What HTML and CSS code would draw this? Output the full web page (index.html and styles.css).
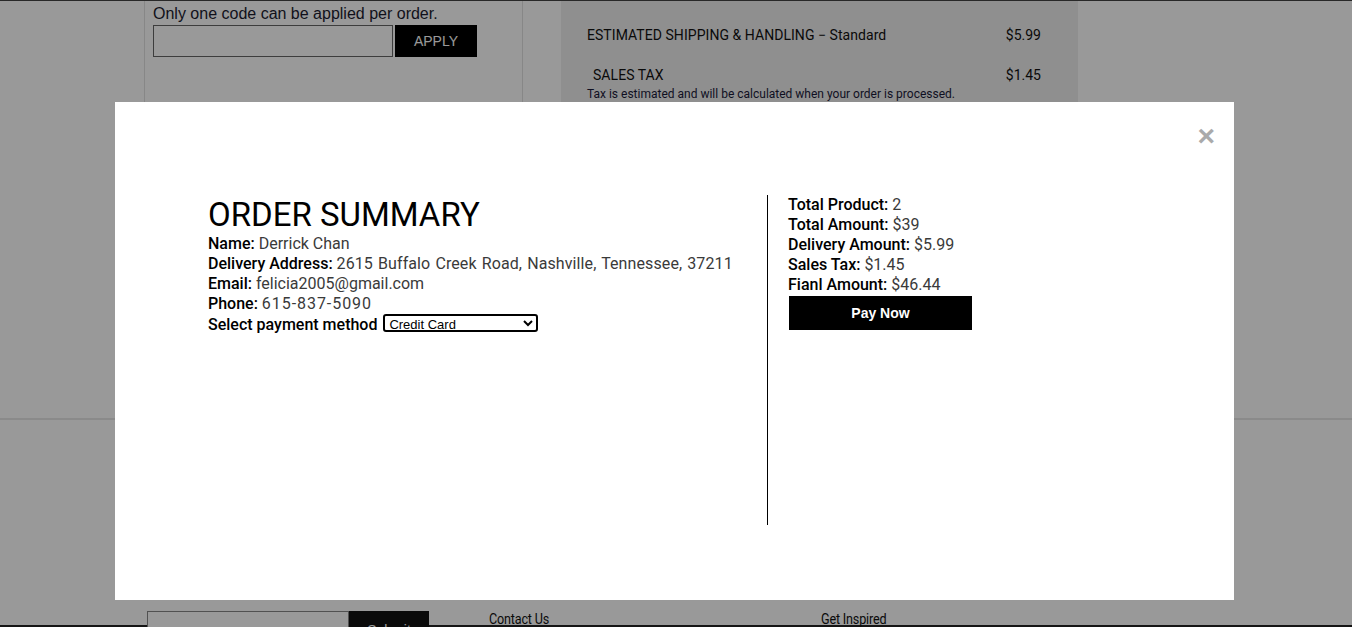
FILE: index.html
```html
<!DOCTYPE html>
<html lang="en">
<head>
<meta charset="utf-8">
<title>Order Summary</title>
<link rel="stylesheet" href="styles.css">
</head>
<body>
<div class="page">
  <div class="topbar"></div>
  <section class="cart">
    <div class="promo">
      <p class="promo-note">Only one code can be applied per order.</p>
      <div class="promo-form">
        <input class="promo-input" type="text" aria-label="Promo code">
        <button class="promo-btn">APPLY</button>
      </div>
    </div>
    <div class="summary">
      <div class="sum-row"><span>ESTIMATED SHIPPING &amp; HANDLING − Standard</span><span>$5.99</span></div>
      <div class="sum-row tax"><span>SALES TAX</span><span>$1.45</span></div>
      <p class="sum-note">Tax is estimated and will be calculated when your order is processed.</p>
    </div>
  </section>
  <div class="divider"></div>
  <footer class="footer">
    <div class="news">
      <input class="news-input" type="text" aria-label="Email">
      <button class="news-btn">Submit</button>
    </div>
    <div class="foot-col first">Contact Us</div>
    <div class="foot-col second">Get Inspired</div>
  </footer>
  <div class="footbar"></div>
</div>

<div class="overlay">
  <div class="modal">
    <div class="modal-top"><span class="close">×</span></div>
    <div class="modal-body">
      <div class="info">
        <h1 class="title">ORDER SUMMARY</h1>
        <p class="line"><b>Name:</b> <span>Derrick Chan</span></p>
        <p class="line"><b>Delivery Address:</b> <span class="addr">2615 Buffalo Creek Road, Nashville, Tennessee, 37211</span></p>
        <p class="line"><b>Email:</b> <span>felicia2005@gmail.com</span></p>
        <p class="line"><b>Phone:</b> <span class="phone">615-837-5090</span></p>
        <p class="line"><b>Select payment method</b> <select class="pay-select"><option>Credit Card</option></select></p>
      </div>
      <div class="totals">
        <p class="line"><b>Total Product:</b> <span>2</span></p>
        <p class="line"><b>Total Amount:</b> <span>$39</span></p>
        <p class="line"><b>Delivery Amount:</b> <span>$5.99</span></p>
        <p class="line"><b>Sales Tax:</b> <span>$1.45</span></p>
        <p class="line"><b>Fianl Amount:</b> <span>$46.44</span></p>
        <button class="pay-btn">Pay Now</button>
      </div>
    </div>
  </div>
</div>
</body>
</html>
```

FILE: styles.css
```css
* { box-sizing: border-box; }
html, body { margin: 0; padding: 0; height: 100%; overflow: hidden; }
body { background: #fff; font-family: Roboto, "Liberation Sans", sans-serif; color: #000; }

.page { width: 1352px; }
.topbar { height: 1px; background: #444; }

.cart { display: flex; height: 417px; }
.promo {
  margin-left: 144px;
  width: 379px;
  border-left: 1px solid #e2e2e2;
  border-right: 1px solid #e2e2e2;
  padding: 3px 0 0 8px;
}
.promo-note { margin: 0; font-family: "Liberation Sans", Arial, sans-serif; font-size: 16px; line-height: 20px; color: #1c1c30; }
.promo-form { display: flex; gap: 2px; margin-top: 1px; }
.promo-input { width: 240px; height: 32px; border: 1px solid #666; margin: 0; background: #fff; }
.promo-btn {
  width: 82px; height: 32px; background: #000; color: #fff; border: 0; margin: 0; padding-bottom: 2px;
  font-family: "Liberation Sans", Arial, sans-serif; font-size: 14px;
}
.summary {
  margin-left: 38px;
  width: 517px;
  background: #eee;
  padding: 24px 37px 0 26px;
  font-size: 14px;
  color: #111;
}
.sum-row { display: flex; justify-content: space-between; line-height: 20px; }
.sum-row span:first-child { letter-spacing: 0.05px; }
.sum-row.tax { margin-top: 20px; padding-left: 6px; }
.sum-note { margin: 2px 0 0; font-size: 12px; line-height: 14px; color: #1a1a3a; }

.divider { height: 2px; background: #e6e6e6; }

.footer { display: flex; align-items: flex-start; height: 205px; padding-top: 191px; }
.news { display: flex; margin-left: 147px; }
.news-input { width: 202px; height: 30px; border: 1px solid #888; margin: 0; }
.news-btn { width: 80px; height: 30px; background: #111; color: #fff; border: 0; margin: 0; font-size: 14px; padding-top: 8px; }
.foot-col { font-family: "Roboto", sans-serif; font-size: 14px; line-height: 16px; color: #111; letter-spacing: -0.2px; transform: scaleX(0.9); transform-origin: left; }
.foot-col.first { margin-left: 60px; }
.foot-col.second { margin-left: 265px; }
.footbar { height: 40px; background: #222; }

.overlay {
  position: fixed; inset: 0;
  background: rgba(0, 0, 0, 0.4);
  padding: 102px 0 0 115px;
}
.modal {
  width: 1119px; height: 498px;
  background: #fff;
  padding: 14px 19px 0 93px;
}
.modal-top { display: flex; justify-content: flex-end; height: 79px; }
.close { font-family: "Liberation Sans", Arial, sans-serif; font-size: 30px; font-weight: bold; color: #aaa; line-height: 40px; }

.modal-body { display: flex; height: 330px; }
.info { width: 559px; }
.title { margin: 0; font-weight: 400; font-size: 33px; line-height: 39px; letter-spacing: 0; color: #000; }
.line { margin: 0; font-size: 16px; line-height: 20px; color: #000; white-space: nowrap; }
.line b { font-weight: 500; }
.line span { color: #3a3a3a; }
.line .addr { letter-spacing: 0.1px; word-spacing: 1px; }
.line .phone { letter-spacing: 0.95px; }
.pay-select {
  font-family: "Liberation Sans", Arial, sans-serif; font-size: 13px;
  width: 155px; height: 18px; border: 2px solid #000; border-radius: 3px;
  padding: 0 0 0 0; background: #fff; color: #000; vertical-align: 1px; margin-left: 2px;
}
.totals { border-left: 1px solid #000; padding-left: 20px; }
.pay-btn {
  display: block; margin: 1px 0 0 1px;
  width: 183px; height: 34px; background: #000; color: #fff; border: 0;
  font-family: "Liberation Sans", Arial, sans-serif; font-size: 14px; font-weight: bold;
}
```
